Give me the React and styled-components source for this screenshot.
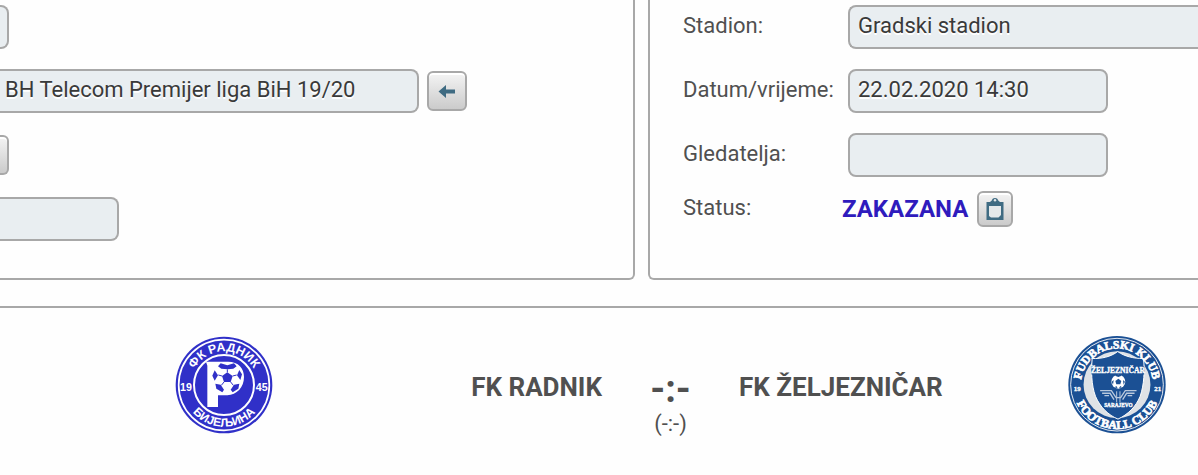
import React from "react";
import styled, { createGlobalStyle } from "styled-components";

const GlobalStyle = createGlobalStyle`
  * {
    box-sizing: border-box;
  }
  body {
    margin: 0;
    background: #fefefe;
    color: #505050;
    font-family: Roboto, "Liberation Sans", sans-serif;
    font-size: 22px;
    line-height: 28px;
    overflow-x: hidden;
  }
`;

const Panels = styled.div`
  display: grid;
  grid-template-columns: 635fr 550fr;
  gap: 13px;
`;

const Panel = styled.section`
  display: flex;
  flex-direction: column;
  min-width: 0;
  padding: 5px 0 37px;
  border: 2px solid #a8a8a8;
  border-top: none;
`;

const LeftPanel = styled(Panel)`
  gap: 20px;
  border-left: none;
  border-bottom-right-radius: 6px;
`;

const RightPanel = styled(Panel)`
  gap: 20px;
  padding-left: 33px;
  border-right: none;
  border-bottom-left-radius: 6px;
`;

const Row = styled.div`
  display: flex;
  align-items: center;
  gap: 8px;
  height: 44px;
`;

const FormRow = styled.div`
  display: flex;
  align-items: center;
  height: 44px;
`;

const StatusRow = styled(FormRow)`
  height: 36px;
  margin-top: -6px;
`;

const Label = styled.label`
  flex: none;
  width: ${(props) => props.$width || 165}px;
  padding-bottom: 2px;
`;

const Field = styled.input`
  width: ${(props) => (props.$width ? `${props.$width}px` : "auto")};
  flex: ${(props) => (props.$grow ? "1" : "none")};
  min-width: 0;
  height: 44px;
  padding: 0 8px 4px;
  border: 2px solid #a8a8a8;
  border-radius: 8px;
  outline: none;
  background: #e9eef1;
  color: #3a3a3a;
  font: inherit;
  text-shadow: 0 2px 0 #fff;
`;

const LeftField = styled(Field)`
  padding: 0 0 4px 5px;
  border-left: none;
  border-top-left-radius: 0;
  border-bottom-left-radius: 0;
`;

const StadiumField = styled(Field)`
  border-right: none;
  border-top-right-radius: 0;
  border-bottom-right-radius: 0;
`;

const IconButton = styled.button`
  display: flex;
  align-items: center;
  justify-content: center;
  flex: none;
  width: ${(props) => props.$size}px;
  height: ${(props) => props.$size}px;
  padding: 0;
  border: 2px solid #a8a8a8;
  border-radius: 6px;
  background: linear-gradient(#f4f4f4, #cbcbcb);
  box-shadow: inset 0 2px 0 #fff;
  color: #3f6b82;
  cursor: pointer;
`;

const EdgeButton = styled(IconButton)`
  width: 9px;
  border-left: none;
  border-top-left-radius: 0;
  border-bottom-left-radius: 0;
`;

const Status = styled.strong`
  margin-right: 9px;
  color: #2f1bbd;
  font-size: 24px;
`;

const Match = styled.section`
  display: grid;
  grid-template-columns: 448fr 154fr 137fr 297fr 162fr;
  margin-top: 26px;
  padding: 28px 0 36px;
  border-top: 2px solid #a8a8a8;
`;

const Crest = styled.svg`
  display: block;
  width: 98px;
  height: 98px;
  justify-self: center;
`;

const Team = styled.h2`
  margin: 0;
  padding-top: 37px;
  font-size: 26px;
  line-height: 28px;
  font-weight: 700;
  text-align: ${(props) => props.$align};
  white-space: nowrap;
`;

const Score = styled.div`
  display: flex;
  flex-direction: column;
  align-items: center;
  padding-top: 32px;
`;

const FullTime = styled.strong`
  font-size: 38px;
  line-height: 42px;
`;

const ArrowIcon = () => (
  <svg width="18" height="14" viewBox="0 0 18 14" fill="currentColor">
    <path d="M0.500 7.500L8 1V5.500H17V9.500H8V14Z" />
  </svg>
);

const ClipboardIcon = () => (
  <svg width="18" height="24" viewBox="0 0 18 24">
    <path
      d="M0.500 5H4L6 3.200C6.300 0.300 11.700 0.300 12 3.200L14 5H17.500V23H0.500Z"
      fill="#3f6b82"
    />
    <circle cx="9" cy="3.200" r="1.200" fill="#e4e8ea" />
    <path d="M3 9H15V18L12.500 20.500H5L3 19Z" fill="#e4e8ea" />
  </svg>
);

const RadnikCrest = () => (
  <Crest viewBox="31 33 294 294" role="img" aria-label="FK Radnik">
    <defs>
      <path id="radnik-top" d="M77 180A101 101 0 0 1 279 180" />
      <path id="radnik-bottom" d="M53 180A125 125 0 0 0 303 180" />
    </defs>
    <circle cx="178" cy="180" r="145" fill="#3030c8" />
    <circle cx="178" cy="180" r="136" fill="none" stroke="#fff" strokeWidth="5" />
    <circle cx="178" cy="180" r="90" fill="none" stroke="#fff" strokeWidth="6" />
    <path
      d="M124 110H190C222 110 238 130 238 156C238 188 216 209 188 211H160V246H128V122Z"
      fill="#fff"
    />
    <circle cx="188" cy="159" r="41" fill="#fff" />
    <g transform="translate(3 0)">
      <g fill="#3030c8">
        <path d="M185 142L201 153L195 171H175L169 153Z" />
        <path d="M165 115L185 121L205 115L213 124L203 131L186 133L167 131L157 124Z" />
        <path d="M221 135L214 151L224 165L229 148Z" />
        <path d="M147 136L157 151L147 167L140 152Z" />
        <path d="M149 176L165 179L175 194L170 202L152 191Z" />
        <path d="M221 176L205 179L195 194L201 202L218 191Z" />
      </g>
      <path
        d="M185 142V133M201 153L213 150M195 171L203 181M175 171L167 181M169 153L158 150"
        stroke="#3030c8"
        strokeWidth="3"
      />
    </g>
    <g
      fill="#fff"
      fontFamily="Liberation Sans, sans-serif"
      fontWeight="700"
      textAnchor="middle"
    >
      <text fontSize="37">
        <textPath href="#radnik-top" startOffset="50%">
          ФК РАДНИК
        </textPath>
      </text>
      <text fontSize="36">
        <textPath href="#radnik-bottom" startOffset="50%">
          БИЈЕЉИНА
        </textPath>
      </text>
      <text x="64" y="198" fontSize="32">
        19
      </text>
      <text x="291" y="198" fontSize="32">
        45
      </text>
    </g>
  </Crest>
);

const ZeljeznicarCrest = () => (
  <Crest viewBox="29 33 296 296" role="img" aria-label="FK Željezničar">
    <defs>
      <path id="zeljo-top" d="M68 180A109 109 0 0 1 286 180" />
      <path id="zeljo-bottom" d="M43 180A134 134 0 0 0 311 180" />
    </defs>
    <circle cx="177" cy="180" r="147" fill="#1b5094" />
    <circle cx="177" cy="180" r="140" fill="none" stroke="#e6ebf2" strokeWidth="3" />
    <circle cx="177" cy="180" r="101" fill="#dfe2e6" />
    <path
      d="M179 80C158 96 130 102 102 101C99 137 99 180 112 215C126 248 151 272 180 284C210 270 234 247 247 215C259 180 261 137 257 101C226 101 201 95 179 80Z"
      fill="#1b5094"
      stroke="#fff"
      strokeWidth="3"
    />
    <path d="M99 125H260L259 149H100Z" fill="#1b5094" />
    <circle cx="181" cy="171" r="21" fill="#fff" />
    <g fill="#1b5094">
      <path d="M181 162L190 169L187 179H175L172 169Z" />
      <path d="M171 153L181 157L191 153L188 150H174ZM161 171L167 166L165 180ZM201 171L195 166L197 180ZM170 188L175 184L179 191ZM192 188L187 184L183 191Z" />
    </g>
    <g fill="none" stroke="#b9c9dd" strokeWidth="4">
      <path d="M126 198H160L174 219H188L202 198H236M132 206H156L168 225M230 206H206L194 225M139 213H153M223 213H209" />
      <path d="M176 200V233M186 200V233" strokeWidth="3" />
    </g>
    <g
      fill="#fff"
      stroke="#fff"
      strokeWidth="2"
      fontFamily="Liberation Serif, serif"
      fontWeight="700"
      textAnchor="middle"
    >
      <text fontSize="35">
        <textPath href="#zeljo-top" startOffset="50%">
          FUDBALSKI KLUB
        </textPath>
      </text>
      <text fontSize="36">
        <textPath href="#zeljo-bottom" startOffset="50%">
          FOOTBALL CLUB
        </textPath>
      </text>
      <g strokeWidth="1">
        <text x="180" y="144" fontSize="23">
          ŽELJEZNIČAR
        </text>
        <text x="181" y="248" fontSize="16">
          SARAJEVO
        </text>
        <text x="57" y="199" fontSize="21">
          19
        </text>
        <text x="300" y="199" fontSize="21">
          21
        </text>
      </g>
    </g>
  </Crest>
);

const App = () => {
  return (
    <>
      <GlobalStyle />
      <main>
        <Panels>
          <LeftPanel>
            <Row>
              <LeftField $width={9} readOnly aria-label="Broj utakmice" />
            </Row>
            <Row>
              <LeftField
                $width={419}
                readOnly
                aria-label="Takmičenje"
                value="BH Telecom Premijer liga BiH 19/20"
              />
              <IconButton $size={40} type="button" aria-label="Nazad">
                <ArrowIcon />
              </IconButton>
            </Row>
            <Row>
              <EdgeButton $size={40} type="button" aria-label="Kolo" />
            </Row>
            <Row>
              <LeftField $width={119} readOnly aria-label="Grupa" />
            </Row>
          </LeftPanel>
          <RightPanel>
            <FormRow>
              <Label htmlFor="stadion">Stadion:</Label>
              <StadiumField id="stadion" $grow readOnly value="Gradski stadion" />
            </FormRow>
            <FormRow>
              <Label htmlFor="datum">Datum/vrijeme:</Label>
              <Field id="datum" $width={260} readOnly value="22.02.2020 14:30" />
            </FormRow>
            <FormRow>
              <Label htmlFor="gledatelja">Gledatelja:</Label>
              <Field id="gledatelja" $width={260} readOnly />
            </FormRow>
            <StatusRow>
              <Label as="span" $width={159}>
                Status:
              </Label>
              <Status>ZAKAZANA</Status>
              <IconButton $size={36} type="button" aria-label="Promijeni status">
                <ClipboardIcon />
              </IconButton>
            </StatusRow>
          </RightPanel>
        </Panels>
        <Match>
          <RadnikCrest />
          <Team $align="right">FK RADNIK</Team>
          <Score>
            <FullTime>-:-</FullTime>
            <span>(-:-)</span>
          </Score>
          <Team $align="left">FK ŽELJEZNIČAR</Team>
          <ZeljeznicarCrest />
        </Match>
      </main>
    </>
  );
};

export default App;
